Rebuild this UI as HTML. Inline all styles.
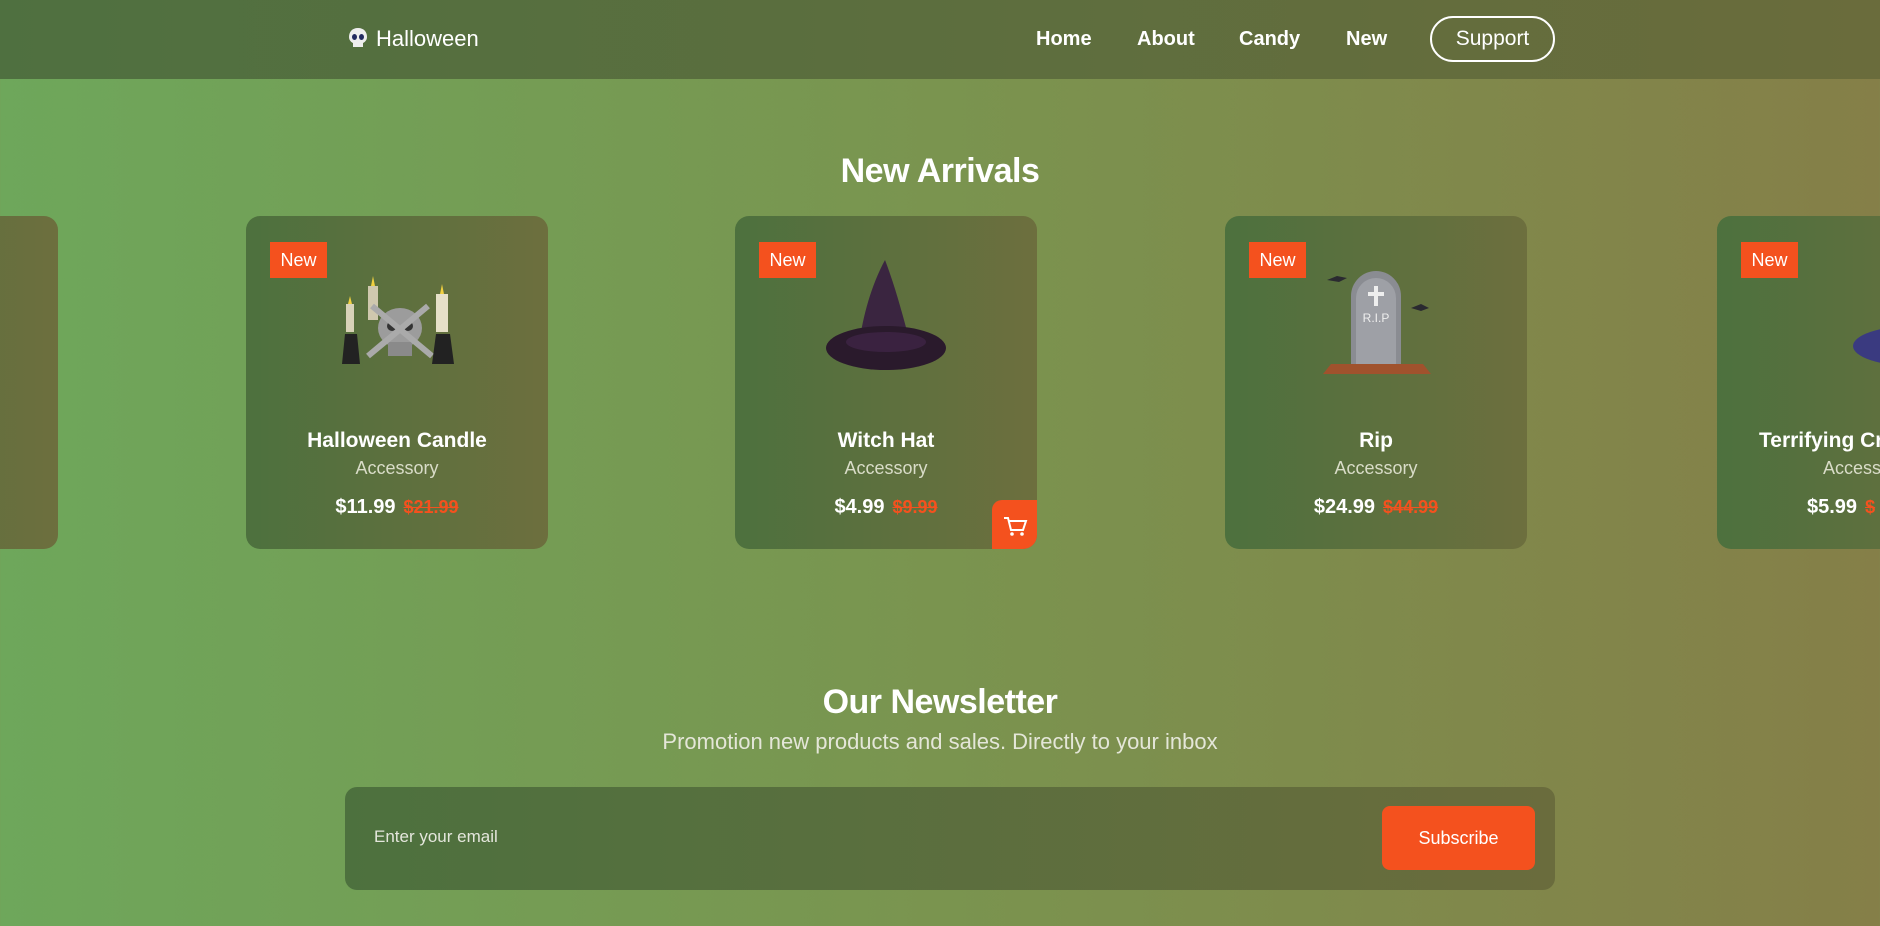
<!DOCTYPE html>
<html><head><meta charset="utf-8"><style>
*{margin:0;padding:0;box-sizing:border-box}
body{width:1880px;height:926px;overflow:hidden;font-family:"Liberation Sans",sans-serif;color:#fff;background:linear-gradient(90deg,#6ea75b 0%,#7a944f 50%,#857f48 100%);position:relative}
header{position:absolute;left:0;top:0;width:1880px;height:79px;background:linear-gradient(90deg,#4f7040,#6a6c3c)}
.logo{position:absolute;left:346px;top:26px;font-size:22px}
.logo span{margin-left:6px}
nav a{position:absolute;top:28px;font-size:20px;font-weight:bold;color:#fff;text-decoration:none}
.sup{position:absolute;left:1430px;top:16px;width:125px;height:46px;border:2px solid #fff;border-radius:23px;font-size:21px;text-align:center;line-height:42px}
h2{position:absolute;width:1880px;text-align:center;font-size:34px;font-weight:900;letter-spacing:-0.5px}
.card{position:absolute;top:216px;width:302px;height:333px;border-radius:14px;background:linear-gradient(90deg,#4d713e,#6d6f3e);overflow:hidden}
.badge{position:absolute;left:24px;top:26px;width:57px;height:36px;background:#f4511e;font-size:18px;text-align:center;line-height:36px}
.img{position:absolute;left:86px;top:40px;width:130px;height:130px}
.t{position:absolute;top:213px;width:100%;text-align:center;font-size:21px;font-weight:bold}
.s{position:absolute;top:242px;width:100%;text-align:center;font-size:18px;color:#d9dcc8}
.p{position:absolute;top:280px;width:100%;text-align:center;font-size:20px;font-weight:bold}
.p s{color:#f4511e;font-size:18px;margin-left:8px}
.cart{position:absolute;right:0;bottom:0;width:45px;height:49px;background:#f4511e;border-radius:10px 0 0 0}
.form{position:absolute;left:345px;top:787px;width:1210px;height:103px;border-radius:12px;background:linear-gradient(90deg,#4d713e,#6a6c3d)}
.form .in{position:absolute;left:29px;top:40px;font-size:17px;color:#e4e6dc}
.form .b{position:absolute;left:1037px;top:19px;width:153px;height:64px;border-radius:8px;background:#f4511e;font-size:18px;text-align:center;line-height:64px}
</style></head><body>
<header>
<div class="logo"><svg width="24" height="24" viewBox="0 0 24 24" style="vertical-align:-4px"><path d="M12 2C6 2 3 6 3 11c0 3 2 5 4 6v4h10v-4c2-1 4-3 4-6 0-5-3-9-9-9z" fill="#eee"/><ellipse cx="8.5" cy="11" rx="2.5" ry="3" fill="#222a60"/><ellipse cx="15.5" cy="11" rx="2.5" ry="3" fill="#222a60"/></svg><span>Halloween</span></div>
<nav><a style="left:1036px">Home</a><a style="left:1137px">About</a><a style="left:1239px">Candy</a><a style="left:1346px">New</a></nav>
<div class="sup">Support</div>
</header>
<h2 style="top:152px">New Arrivals</h2>

<div class="card" style="left:-244px"></div>

<div class="card" style="left:246px"><div class="badge">New</div>
<svg class="img" viewBox="0 0 130 130"><rect x="14" y="48" width="8" height="28" fill="#d8d2b8"/><rect x="36" y="30" width="10" height="34" fill="#cfc8ae"/><rect x="104" y="38" width="12" height="38" fill="#e6e0c8"/><path d="M18 40l2 8h-4z M41 20l2 10h-4z M110 28l2 10h-4z" fill="#f0d040"/><ellipse cx="68" cy="72" rx="22" ry="20" fill="#9c9c9c"/><rect x="56" y="86" width="24" height="14" fill="#8a8a8a"/><circle cx="60" cy="70" r="5" fill="#333"/><circle cx="76" cy="70" r="5" fill="#333"/><path d="M40 50l60 50M96 50l-60 50" stroke="#aaa" stroke-width="6"/><path d="M10 108h18l-3-30h-12z M100 108h22l-4-30h-14z" fill="#222"/></svg>
<div class="t">Halloween Candle</div><div class="s">Accessory</div><div class="p">$11.99<s>$21.99</s></div></div>

<div class="card" style="left:735px"><div class="badge">New</div>
<svg class="img" viewBox="0 0 130 130"><path d="M64 4 C50 30 42 60 38 88 L90 90 C82 60 74 30 64 4z" fill="#3a2540"/><rect x="50" y="74" width="28" height="8" fill="#d0a020"/><ellipse cx="65" cy="92" rx="60" ry="22" fill="#2a1a2c"/><ellipse cx="65" cy="86" rx="40" ry="10" fill="#3a2240"/></svg>
<div class="t">Witch Hat</div><div class="s">Accessory</div><div class="p">$4.99<s>$9.99</s></div>
<div class="cart"><svg width="45" height="49" viewBox="0 0 45 49"><path d="M12 18h4l3 12h12l3-9H17" fill="none" stroke="#fff" stroke-width="2"/><circle cx="20" cy="34" r="1.8" fill="#fff"/><circle cx="30" cy="34" r="1.8" fill="#fff"/></svg></div></div>

<div class="card" style="left:1225px"><div class="badge">New</div>
<svg class="img" viewBox="0 0 130 130"><path d="M40 110V40a25 25 0 0 1 50 0v70z" fill="#8a8c92"/><path d="M45 108V42a20 20 0 0 1 40 0v66z" fill="#9ea0a6"/><path d="M63 30h4v20h-4zM57 36h16v4H57z" fill="#eee"/><text x="65" y="66" font-size="12" fill="#eee" text-anchor="middle" font-family="Liberation Sans">R.I.P</text><path d="M12 118l8-10h92l8 10z" fill="#a0522d"/><path d="M16 24l10-4 10 2-8 4z M100 52l10-4 8 4-8 3z" fill="#2a2a30"/></svg>
<div class="t">Rip</div><div class="s">Accessory</div><div class="p">$24.99<s>$44.99</s></div></div>

<div class="card" style="left:1717px"><div class="badge">New</div>
<svg class="img" viewBox="0 0 130 130"><ellipse cx="110" cy="90" rx="60" ry="20" fill="#3a3a80"/><path d="M80 90 L88 40 Q110 20 130 40 V92z" fill="#4a4aa0"/><circle cx="112" cy="40" r="14" fill="#9aa"/></svg>
<div class="t" style="text-align:left;left:42px">Terrifying Cr</div><div class="s" style="text-align:left;left:106px">Access</div><div class="p" style="text-align:left;left:90px">$5.99<s>$</s></div></div>

<h2 style="top:683px">Our Newsletter</h2>
<div style="position:absolute;top:729px;width:1880px;text-align:center;font-size:22px;color:#e4e6d8">Promotion new products and sales. Directly to your inbox</div>
<div class="form"><div class="in">Enter your email</div><div class="b">Subscribe</div></div>
</body></html>
